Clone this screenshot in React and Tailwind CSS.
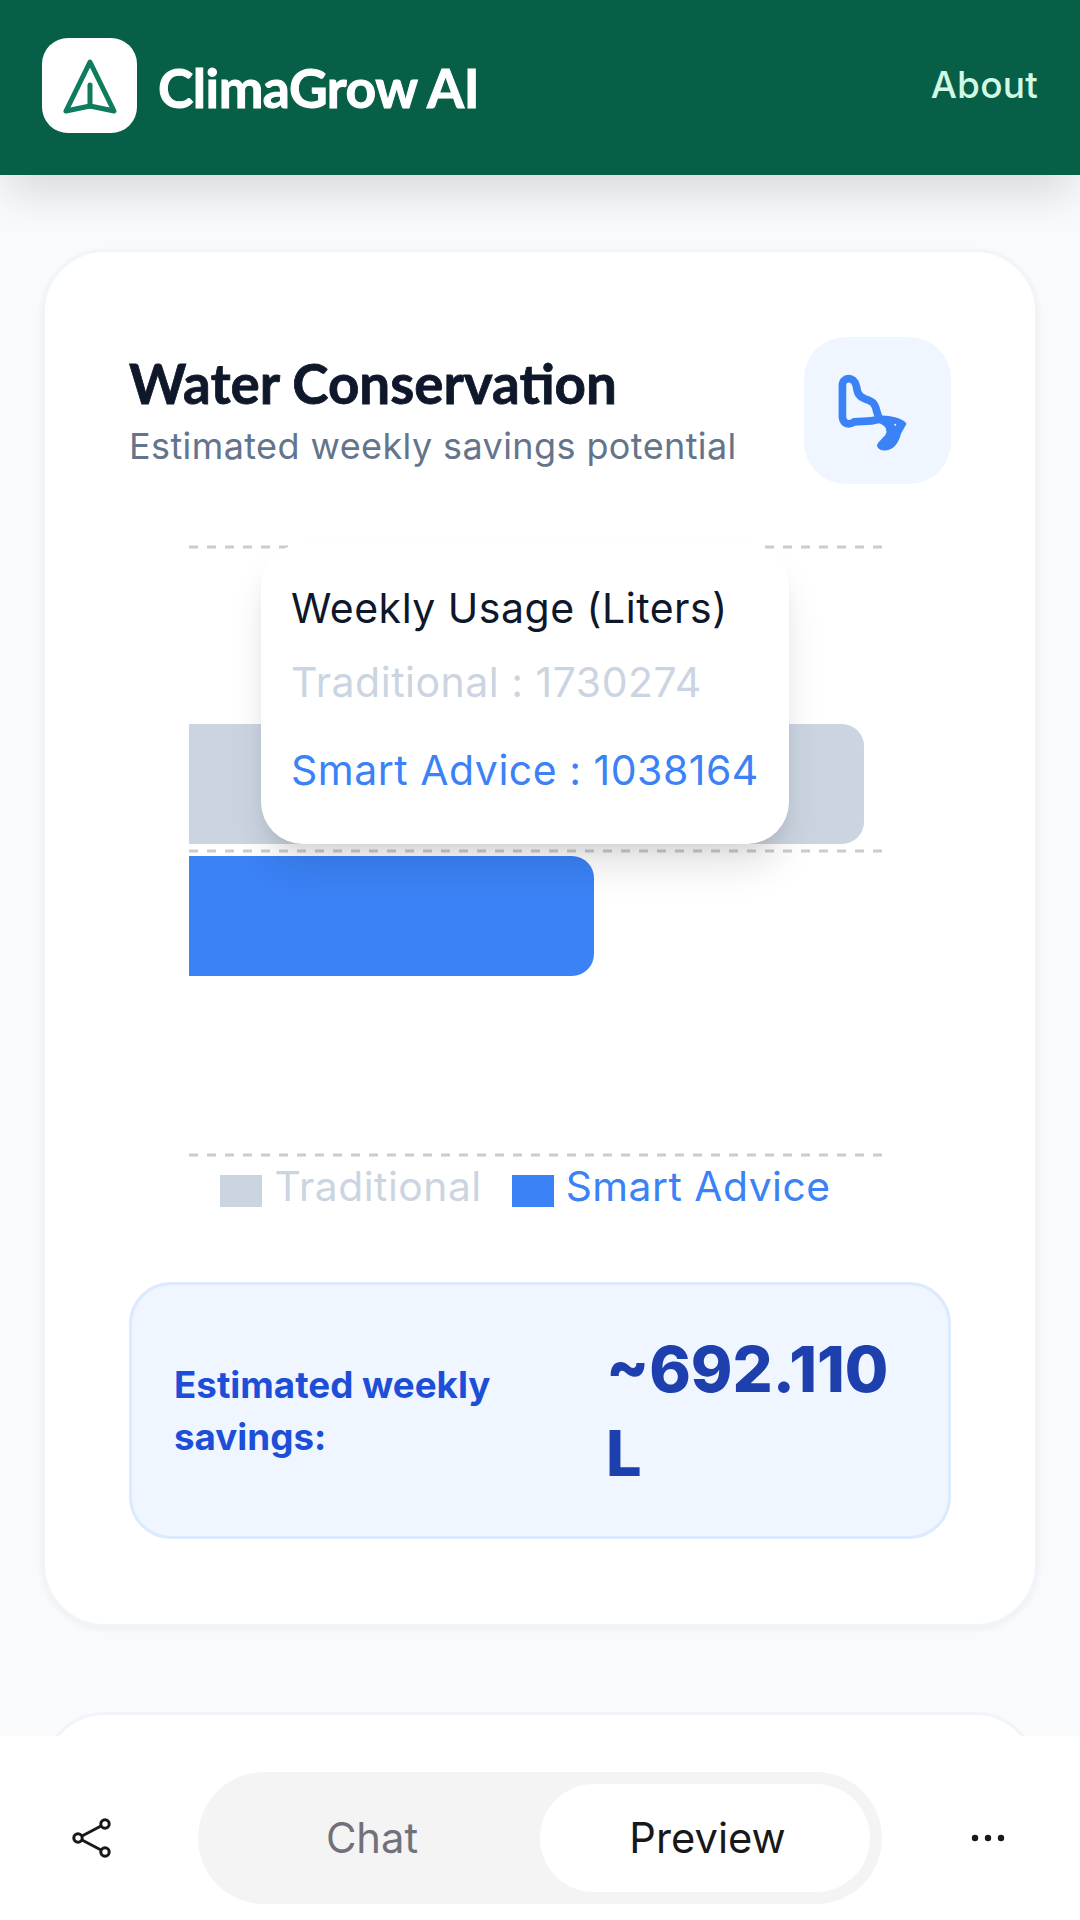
const inter = "font-['Inter',sans-serif]";

const Logo = () => (
  <svg viewBox="0 0 91 94" className="w-[91px] h-[94px]" fill="none">
    <path
      d="M46 23 L22 72 L46 67 L70 72 Z"
      stroke="#0f7b5f"
      strokeWidth="5"
      strokeLinejoin="round"
    />
    <path d="M46 46 V67" stroke="#0f7b5f" strokeWidth="5" strokeLinecap="round" />
  </svg>
);

const DropletIcon = () => (
  <svg viewBox="0 0 440 440" className="w-[147px] h-[147px]" fill="none">
    <path
      d="M115 240 V145 C115 120 150 115 157 148 C160 170 165 178 182 185 C205 192 212 198 217 220 L225 246 C190 256 175 250 150 254 C135 264 118 262 115 240 Z"
      stroke="#3b82f6"
      strokeWidth="23"
      strokeLinejoin="round"
    />
    <path
      d="M226 238 C255 236 294 245 304 260 L288 288 C282 314 268 334 243 337 C228 339 216 327 224 318 L246 294 C254 280 248 264 226 256 Z"
      fill="#3b82f6"
      stroke="#3b82f6"
      strokeWidth="5"
      strokeLinejoin="round"
    />
    <circle cx="273" cy="263" r="3" fill="#eff6ff" />
  </svg>
);

const ShareIcon = () => (
  <svg viewBox="0 0 44 44" className="w-[44px] h-[44px]" fill="none" stroke="#18181b" strokeWidth="3">
    <circle cx="35" cy="8" r="4.2" />
    <circle cx="8" cy="22" r="4.2" />
    <circle cx="35" cy="36" r="4.2" />
    <path d="M31 10 L12 20 M12 24 L31 34" />
  </svg>
);

const DotsIcon = () => (
  <svg viewBox="0 0 40 10" className="w-[40px] h-[10px]" fill="#18181b">
    <circle cx="7" cy="5" r="3.2" />
    <circle cx="20" cy="5" r="3.2" />
    <circle cx="33" cy="5" r="3.2" />
  </svg>
);

// bars and grid lines, coordinates relative to the chart box
const UsageChart = () => (
  <div className="relative h-[615px]">
    <svg viewBox="0 0 822 615" className="w-full h-[615px]" fill="none">
      {[3, 307, 611].map((y) => (
        <line key={y} x1="60" x2="753" y1={y} y2={y} stroke="#ccc" strokeWidth="3" strokeDasharray="9 9" />
      ))}
      <path d="M60 180 H713 a22 22 0 0 1 22 22 V278 a22 22 0 0 1 -22 22 H60 Z" fill="#cbd5e1" />
      <path d="M60 312 H443 a22 22 0 0 1 22 22 V410 a22 22 0 0 1 -22 22 H60 Z" fill="#3b82f6" />
    </svg>
    <div className="absolute left-[132px] top-0 w-[528px] h-[300px] bg-white rounded-[42px] pl-[30px] pt-[36px] shadow-[0_26px_40px_-6px_rgba(0,0,0,0.12),0_10px_16px_-6px_rgba(0,0,0,0.08)]">
      <p className="text-[41px] leading-[56px] tracking-[0.5px] text-[#0f172a]">Weekly Usage (Liters)</p>
      <p className="text-[41px] leading-[56px] tracking-[0.5px] text-[#cbd5e1] mt-[18px]">Traditional : 1730274</p>
      <p className="text-[41px] leading-[56px] tracking-[0.5px] text-[#3b82f6] mt-[32px]">Smart Advice : 1038164</p>
    </div>
  </div>
);

export default function App() {
  return (
    <div className={`${inter} w-[1080px] h-[1920px] flex flex-col bg-[#f8fafc] overflow-hidden`}>
      <header className="relative z-10 h-[175px] shrink-0 bg-[#065f46] flex items-center justify-between pl-[42px] pr-[42px] shadow-[0_26px_40px_-6px_rgba(0,0,0,0.12)]">
        <div className="flex items-center gap-[21px]">
          <div className="w-[95px] h-[95px] mb-[4px] bg-white rounded-[26px] flex items-center justify-center">
            <Logo />
          </div>
          <h1 className="font-['Lato',sans-serif] font-bold text-[53.4px] text-white tracking-[-0.5px] [-webkit-text-stroke:1px_white]">ClimaGrow AI</h1>
        </div>
        <span className="text-[37px] font-medium pb-[5px] tracking-[0.2px] text-[#d1fae5]">About</span>
      </header>

      <main className="flex-1 overflow-hidden px-[42px] pt-[74px]">
        <section className="h-[1378px] bg-white rounded-[63px] border-[3px] border-[#f1f5f9] shadow-[0_2px_6px_rgba(0,0,0,0.05)] px-[84px] pt-[85px]">
          <div className="flex justify-between items-start">
            <div className="pt-[9px]">
              <h2 className="font-['Lato',sans-serif] font-bold text-[54.7px] leading-[75px] text-[#0f172a] [-webkit-text-stroke:0.8px_#0f172a]">Water Conservation</h2>
              <p className="text-[36px] leading-[50px] tracking-[0.4px] text-[#64748b]">Estimated weekly savings potential</p>
            </div>
            <div className="w-[147px] h-[147px] rounded-[42px] bg-[#eff6ff] flex items-center justify-center">
              <DropletIcon />
            </div>
          </div>

          <div className="mt-[60px]">
            <UsageChart />
          </div>

          <div className="flex items-center justify-center gap-[30px] pr-[29px] -mt-[2px] h-[60px]">
            <div className="flex items-center gap-[12px]">
              <span className="w-[42px] h-[32px] bg-[#cbd5e1] mt-[8px]" />
              <span className="text-[40.8px] tracking-[0.5px] text-[#cbd5e1]">Traditional</span>
            </div>
            <div className="flex items-center gap-[12px]">
              <span className="w-[42px] h-[32px] bg-[#3b82f6] mt-[8px]" />
              <span className="text-[40.8px] tracking-[0.5px] text-[#3b82f6]">Smart Advice</span>
            </div>
          </div>

          <div className="mt-[65px] h-[257px] bg-[#eff6ff] border-[3px] border-[#dbeafe] rounded-[42px] pl-[42px] pr-[42px] flex items-center justify-between">
            <p className="w-[330px] text-[36.75px] leading-[52px] font-bold text-[#1d4ed8]">Estimated weekly savings:</p>
            <p className="w-[300px] text-[63px] leading-[84px] font-extrabold text-[#1e40af]">~692.110 L</p>
          </div>
        </section>

        <section className="h-[400px] mt-[85px] bg-white rounded-[63px] border-[3px] border-[#f1f5f9]" />
      </main>

      <nav className="h-[184px] shrink-0 bg-white flex items-center pl-[70px] pt-[20px]">
        <ShareIcon />
        <div className="ml-[84px] w-[684px] h-[132px] rounded-full bg-[#f4f4f5] p-[12px] flex items-center text-[41.7px]">
          <span className="w-[330px] pr-[6px] text-center text-[#71717a]">Chat</span>
          <span className="w-[330px] pl-[5px] h-full rounded-full bg-white flex items-center justify-center text-[#18181b]">Preview</span>
        </div>
        <div className="ml-[86px]">
          <DotsIcon />
        </div>
      </nav>
    </div>
  );
}
